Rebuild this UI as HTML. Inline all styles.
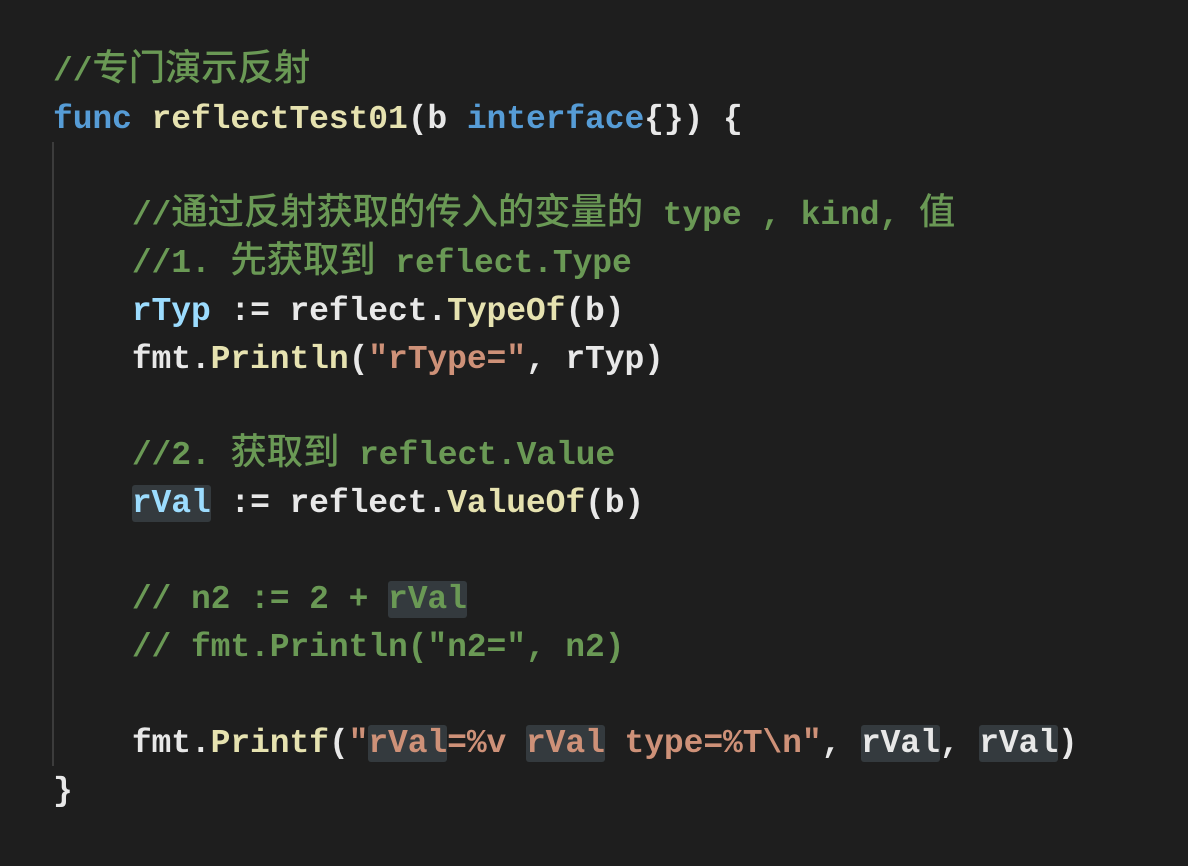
<!DOCTYPE html><html><head><meta charset="utf-8"><style>
body{margin:0;background:#1e1e1e;width:1188px;height:866px;overflow:hidden;position:relative}
pre{margin:0;position:absolute;left:53px;top:48px;font:bold 33px/48px "Liberation Mono","Noto Sans CJK SC",monospace;color:#e8e8e8;letter-spacing:-0.1px}
.c{color:#6a9955}.k{color:#569cd6}.f{color:#e6e2b0}.v{color:#9cdcfe}.s{color:#ce9178}
.z{font-size:36.4px;font-weight:500;line-height:0}
.h{background:#343a3e;border-radius:3px}
.g{position:absolute;left:52px;top:142px;width:2px;height:624px;background:#3c3c3c}
</style></head><body><div class="g"></div><pre><span class="c">//<span class="z">专门演示反射</span></span>
<span class="k">func</span> <span class="f">reflectTest01</span>(b <span class="k">interface</span>{}) {

    <span class="c">//<span class="z">通过反射获取的传入的变量的</span> type , kind, <span class="z">值</span></span>
    <span class="c">//1. <span class="z">先获取到</span> reflect.Type</span>
    <span class="v">rTyp</span> := reflect.<span class="f">TypeOf</span>(b)
    fmt.<span class="f">Println</span>(<span class="s">"rType="</span>, rTyp)

    <span class="c">//2. <span class="z">获取到</span> reflect.Value</span>
    <span class="v h">rVal</span> := reflect.<span class="f">ValueOf</span>(b)

    <span class="c">// n2 := 2 + <span class="h">rVal</span></span>
    <span class="c">// fmt.Println("n2=", n2)</span>

    fmt.<span class="f">Printf</span>(<span class="s">"<span class="h">rVal</span>=%v <span class="h">rVal</span> type=%T\n"</span>, <span class="h">rVal</span>, <span class="h">rVal</span>)
}</pre></body></html>
